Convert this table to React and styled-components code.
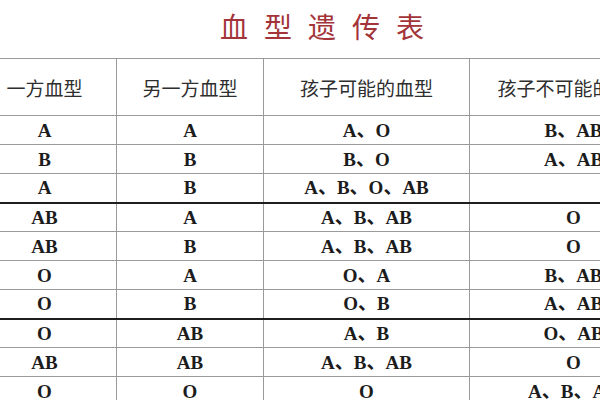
import React from 'react';
import styled, { createGlobalStyle } from 'styled-components';

const GlobalStyle = createGlobalStyle`
    html, body {
        margin: 0;
        padding: 0;
        background: #ffffff;
        overflow: hidden;
    }
    body {
        font-family: "Noto Sans CJK SC", sans-serif;
    }
`;

const Page = styled.div`
    width: 600px;
    height: 400px;
    overflow: hidden;
    background: #ffffff;
`;

const Header = styled.div`
    height: 58px;
    display: flex;
    align-items: center;
    justify-content: center;
    padding-left: 60px;
    box-sizing: border-box;
`;

const Title = styled.h1`
    margin: 0;
    font-family: "Noto Sans CJK SC", sans-serif;
    font-weight: 400;
    font-size: 28px;
    letter-spacing: 16px;
    color: #a3343a;
    line-height: 1;
    margin-top: -6px;
`;

const Table = styled.table`
    border-collapse: collapse;
    table-layout: fixed;
    margin-left: -28px;
    width: 705px;
`;

const HeadCell = styled.th`
    height: 56px;
    padding: 0;
    border: 1px solid #9a9a9a;
    font-family: "Noto Sans CJK SC", sans-serif;
    font-weight: 400;
    font-size: 19px;
    color: #2e2e2e;
    text-align: center;
    white-space: nowrap;
    overflow: hidden;
`;

const Row = styled.tr`
    height: 29px;
    border-bottom: ${p => (p.$strong ? '2px solid #1e1e1e' : '1px solid #9a9a9a')};
`;

const Cell = styled.td`
    padding: 0;
    border-left: 1px solid #9a9a9a;
    border-right: 1px solid #9a9a9a;
    font-family: "Liberation Serif", "Noto Sans CJK SC", serif;
    font-weight: 700;
    font-size: 19px;
    color: #1c1c1c;
    text-align: center;
    white-space: nowrap;
    overflow: hidden;
    line-height: 1;
`;

const rows = [
    ['A', 'A', 'A、O', 'B、AB'],
    ['B', 'B', 'B、O', 'A、AB'],
    ['A', 'B', 'A、B、O、AB', ''],
    ['AB', 'A', 'A、B、AB', 'O'],
    ['AB', 'B', 'A、B、AB', 'O'],
    ['O', 'A', 'O、A', 'B、AB'],
    ['O', 'B', 'O、B', 'A、AB'],
    ['O', 'AB', 'A、B', 'O、AB'],
    ['AB', 'AB', 'A、B、AB', 'O'],
    ['O', 'O', 'O', 'A、B、AB'],
];

// thicker rule under these rows
const strongRows = [2, 6];

const App = () => (
    <Page>
        <GlobalStyle />
        <Header>
            <Title>血型遗传表</Title>
        </Header>
        <Table>
            <colgroup>
                <col width="144" />
                <col width="147" />
                <col width="206" />
                <col width="208" />
            </colgroup>
            <thead>
                <tr>
                    <HeadCell>一方血型</HeadCell>
                    <HeadCell>另一方血型</HeadCell>
                    <HeadCell>孩子可能的血型</HeadCell>
                    <HeadCell>孩子不可能的血型</HeadCell>
                </tr>
            </thead>
            <tbody>
                {rows.map((r, i) => (
                    <Row key={i} $strong={strongRows.includes(i)}>
                        {r.map((c, j) => (
                            <Cell key={j}>{c}</Cell>
                        ))}
                    </Row>
                ))}
            </tbody>
        </Table>
    </Page>
);

export default App;
